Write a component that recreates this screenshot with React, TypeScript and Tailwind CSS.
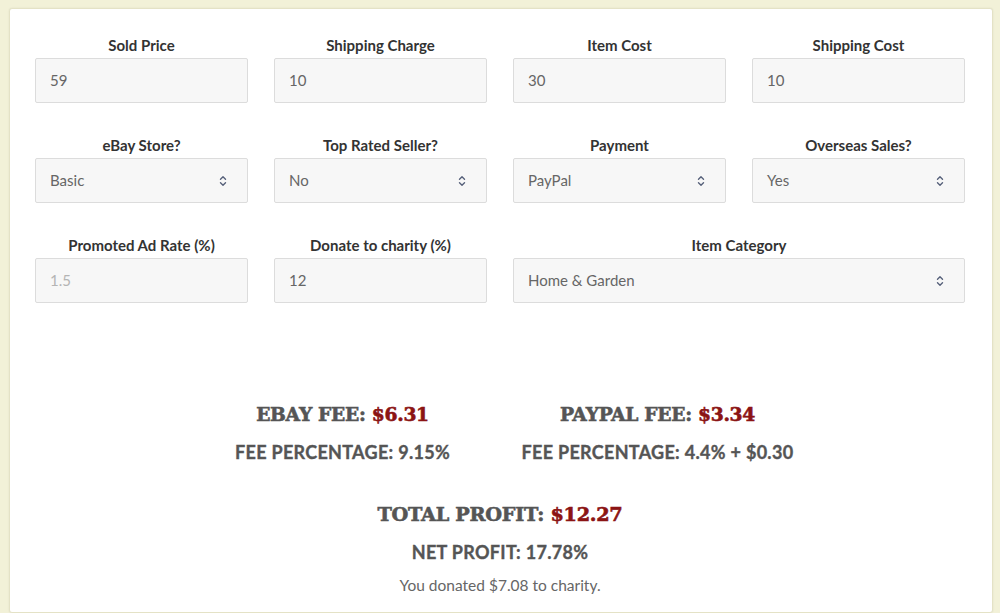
import React from 'react';

const sans = { fontFamily: 'Lato, "Noto Sans", sans-serif' };

function Chevrons() {
  return (
    <svg width="8" height="12" viewBox="0 0 8 12" fill="none" stroke="#56607a" strokeWidth="1.4" strokeLinecap="round" strokeLinejoin="round">
      <path d="M1.5 4.2 L4 1.8 L6.5 4.2" />
      <path d="M1.5 7.8 L4 10.2 L6.5 7.8" />
    </svg>
  );
}

function Field({ label, value, select, muted, wide }: { label: string; value: string; select?: boolean; muted?: boolean; wide?: boolean }) {
  return (
    <div className={wide ? 'col-span-2 flex flex-col' : 'flex flex-col'}>
      <div className="text-center text-[15px] leading-[20px] font-bold text-[#333] mb-[3px]">{label}</div>
      <div className="h-[45px] flex items-center justify-between pl-[14px] pr-[20px] bg-[#f7f7f7] border border-[#dcdcdc] rounded-[2px]">
        <span className={muted ? 'text-[15px] text-[#b4b4b4]' : 'text-[15px] text-[#666]'}>{value}</span>
        {select && <Chevrons />}
      </div>
    </div>
  );
}

// slab-ish headline: serif bold thickened with a thin stroke
const slab = { fontFamily: '"DejaVu Serif", "Liberation Serif", serif' };
const heavy = 'font-bold [-webkit-text-stroke:0.6px_currentColor]';
const sub = 'text-[18px] leading-[24px] font-bold text-[#555] tracking-[0.3px] [-webkit-text-stroke:0.35px_currentColor]';

function Fee({ title, amount, pct }: { title: string; amount: string; pct: string }) {
  return (
    <div className="flex flex-col items-center">
      <div className={`text-[18.7px] leading-[28px] text-[#555] tracking-[-0.3px] ${heavy}`} style={slab}>
        {title} <span className="text-[#8b1414]">{amount}</span>
      </div>
      <div className={`mt-[12px] ${sub}`}>{pct}</div>
    </div>
  );
}

export default function App() {
  return (
    <div className="h-[613px] overflow-hidden bg-[#f2f1d8] pt-[8px] pl-[9px] pr-[7px]" style={sans}>
      <div className="h-full bg-white rounded-[3px] border border-[#e4e2c6] shadow-[0_0_2px_rgba(0,0,0,0.08)] pl-[25px] pr-[27px] pt-[26px]">
        <div className="grid grid-cols-4 gap-x-[26px] gap-y-[32px]">
          <Field label="Sold Price" value="59" />
          <Field label="Shipping Charge" value="10" />
          <Field label="Item Cost" value="30" />
          <Field label="Shipping Cost" value="10" />
          <Field label="eBay Store?" value="Basic" select />
          <Field label="Top Rated Seller?" value="No" select />
          <Field label="Payment" value="PayPal" select />
          <Field label="Overseas Sales?" value="Yes" select />
          <Field label="Promoted Ad Rate (%)" value="1.5" muted />
          <Field label="Donate to charity (%)" value="12" />
          <Field label="Item Category" value="Home & Garden" select wide />
        </div>

        <div className="mt-[97px] mx-auto w-[630px] grid grid-cols-2">
          <Fee title="EBAY FEE:" amount="$6.31" pct="FEE PERCENTAGE: 9.15%" />
          <Fee title="PAYPAL FEE:" amount="$3.34" pct="FEE PERCENTAGE: 4.4% + $0.30" />
        </div>

        <div className="mt-[37px] flex flex-col items-center">
          <div className={`text-[19.3px] leading-[28px] text-[#555] tracking-[-0.3px] ${heavy}`} style={slab}>
            TOTAL PROFIT: <span className="text-[#8b1414]">$12.27</span>
          </div>
          <div className={`mt-[11px] ${sub}`}>NET PROFIT: 17.78%</div>
          <div className="mt-[10px] text-[15.5px] leading-[22px] text-[#666]">You donated $7.08 to charity.</div>
        </div>
      </div>
    </div>
  );
}
